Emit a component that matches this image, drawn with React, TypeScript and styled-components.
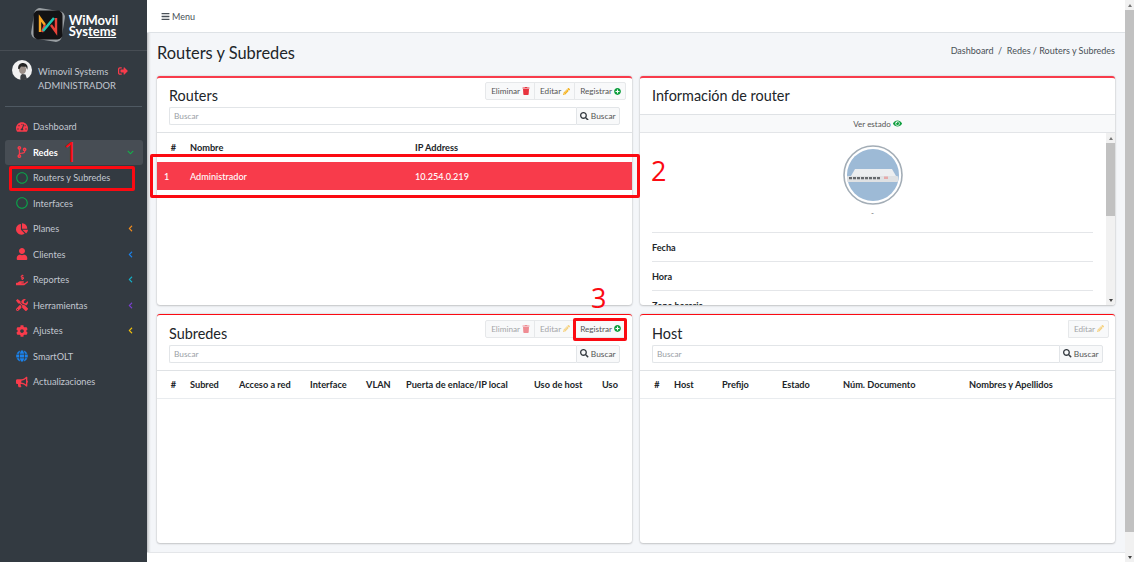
import React from "react";
import styled, { createGlobalStyle } from "styled-components";
import {
  FaBars,
  FaBullhorn,
  FaChartPie,
  FaChevronDown,
  FaChevronLeft,
  FaCodeBranch,
  FaCog,
  FaEye,
  FaGlobe,
  FaHandHoldingUsd,
  FaPencilAlt,
  FaPlusCircle,
  FaRegCircle,
  FaSearch,
  FaSignOutAlt,
  FaTachometerAlt,
  FaTools,
  FaTrash,
  FaUser,
} from "react-icons/fa";

const RED = "#f83b4b";
const MARK = "#fb0a12";
const FONT = `"Lato", "Noto Sans", sans-serif`;

const GlobalStyle = createGlobalStyle`
  *, *::before, *::after {
    box-sizing: border-box;
  }
  html, body {
    margin: 0;
    height: 100%;
    overflow: hidden;
  }
  body {
    font-family: ${FONT};
    font-size: 9px;
    color: #212529;
    background: #f4f6f9;
  }
`;

const Page = styled.div`
  position: relative;
  width: 1134px;
  height: 562px;
  display: flex;
  overflow: hidden;
`;

const Sidebar = styled.aside`
  width: 147px;
  flex: none;
  background: #333a41;
  color: #c2c7d0;
  box-shadow: 1px 0 3px rgba(0, 0, 0, 0.3);
  display: flex;
  flex-direction: column;
`;

const Brand = styled.div`
  height: 51px;
  flex: none;
  display: flex;
  align-items: center;
  justify-content: center;
  gap: 2px;
  border-bottom: 1px solid #474d54;
`;

const BrandText = styled.div`
  color: #fff;
  font-size: 13px;
  font-weight: 700;
  line-height: 12px;
  span {
    display: block;
    height: 11px;
    overflow: visible;
  }
  u {
    text-underline-offset: 1px;
  }
`;

const UserPanel = styled.div`
  height: 56px;
  margin: 0 5px;
  padding: 9px 7px 0;
  display: flex;
  gap: 6px;
  border-bottom: 1px solid #4f5962;
`;

const UserInfo = styled.div`
  font-size: 9.4px;
  line-height: 14px;
  padding-top: 5px;
  white-space: nowrap;
  svg {
    color: ${RED};
    font-size: 10px;
    margin-left: 7px;
    vertical-align: -1px;
  }
`;

const Nav = styled.nav`
  display: flex;
  flex-direction: column;
  padding: 7px 4px 0 5px;
`;

const NavItem = styled.div<{ $active?: boolean }>`
  height: 25.5px;
  display: flex;
  align-items: center;
  padding-left: 11px;
  padding-right: 9px;
  border-radius: 3px;
  font-size: 9.2px;
  background: ${({ $active }) => ($active ? "#474d54" : "transparent")};
  color: ${({ $active }) => ($active ? "#fff" : "#c2c7d0")};
  font-weight: ${({ $active }) => ($active ? 700 : 400)};
`;

const NavIcon = styled.span<{ $color?: string }>`
  width: 17px;
  display: flex;
  align-items: center;
  color: ${({ $color }) => $color || RED};
  font-size: 12px;
  flex: none;
`;

const NavLabel = styled.span`
  flex: 1;
  white-space: nowrap;
`;

const NavArrow = styled.span<{ $color: string }>`
  color: ${({ $color }) => $color};
  font-size: 7px;
  display: flex;
`;

const Main = styled.div`
  flex: 1;
  min-width: 0;
  display: flex;
  flex-direction: column;
`;

const TopBar = styled.header`
  height: 33px;
  flex: none;
  background: #fff;
  border-bottom: 1px solid #dee2e6;
  display: flex;
  align-items: center;
  gap: 2px;
  padding-left: 14px;
  font-size: 9px;
  color: #495057;
  svg {
    font-size: 9px;
  }
`;

const Workspace = styled.div`
  flex: 1;
  min-height: 0;
  display: flex;
  flex-direction: column;
  padding-right: 9px;
`;

const ContentHeader = styled.div`
  height: 43px;
  flex: none;
  display: flex;
  align-items: center;
  justify-content: space-between;
  padding: 0 10px 4px;
`;

const PageTitle = styled.h1`
  margin: 0;
  font-size: 16.4px;
  font-weight: 400;
  color: #212529;
`;

const Breadcrumb = styled.div`
  font-size: 9px;
  color: #495057;
  margin-bottom: 4px;
`;

const Grid = styled.div`
  display: grid;
  grid-template-columns: 475px 475px;
  grid-template-rows: 229px 229px;
  column-gap: 8px;
  row-gap: 9px;
  padding-left: 10px;
`;

const Card = styled.section<{ $thin?: boolean }>`
  background: #fff;
  border-top: ${({ $thin }) => ($thin ? `1.5px solid ${MARK}` : `2px solid ${RED}`)};
  padding-top: ${({ $thin }) => ($thin ? "0.5px" : "0")};
  border-radius: 3px;
  box-shadow: 0 0 2px rgba(0, 0, 0, 0.2), 0 1px 2px rgba(0, 0, 0, 0.15);
  display: flex;
  flex-direction: column;
  overflow: hidden;
`;

const CardHeader = styled.div`
  padding: 4px 12px 7px;
  border-bottom: 1px solid #dfe2e5;
  display: grid;
  grid-template-columns: 1fr auto;
  grid-template-rows: 25px 18px;
  flex: none;
`;

const InfoHeader = styled.div`
  height: 37px;
  flex: none;
  display: flex;
  align-items: center;
  padding: 0 12px 1px;
  border-bottom: 1px solid #dfe2e5;
`;

const CardTitle = styled.h3`
  margin: 0;
  font-size: 14.4px;
  font-weight: 400;
  line-height: 28px;
  color: #212529;
`;

const Tools = styled.div`
  display: flex;
  height: 18px;
  align-items: stretch;
  margin-right: -6px;
`;

const ToolButton = styled.button<{ $faded?: boolean }>`
  font: inherit;
  font-size: 8.2px;
  border: 1px solid #e6e8ea;
  margin-left: -1px;
  background: #f8f9fa;
  color: ${({ $faded }) => ($faded ? "#a4a6a8" : "#555")};
  padding: 0 4px 0 5px;
  display: flex;
  align-items: center;
  gap: 2px;
  svg {
    opacity: ${({ $faded }) => ($faded ? 0.55 : 1)};
  }
  &:first-child {
    border-radius: 2px 0 0 2px;
  }
  &:last-child {
    border-radius: 0 2px 2px 0;
  }
`;

const SearchRow = styled.div`
  grid-column: 1 / -1;
  display: flex;
  height: 18px;
`;

const SearchInput = styled.div`
  flex: 1;
  border: 1px solid #e2e5e8;
  border-right: 0;
  border-radius: 2px 0 0 2px;
  color: #9aa0a6;
  font-size: 8.3px;
  padding-left: 4px;
  display: flex;
  align-items: center;
`;

const SearchButton = styled.div`
  width: 44px;
  border: 1px solid #e2e5e8;
  border-radius: 0 2px 2px 0;
  background: #f8f9fa;
  color: #555;
  font-size: 8.4px;
  display: flex;
  align-items: center;
  justify-content: center;
  gap: 2px;
  svg {
    font-size: 8.5px;
    color: #343a40;
  }
`;

const HeadRow = styled.div<{ $cols: string; $tall?: boolean }>`
  display: grid;
  grid-template-columns: ${({ $cols }) => $cols};
  align-items: center;
  height: ${({ $tall }) => ($tall ? "28px" : "29px")};
  flex: none;
  font-size: 9.2px;
  font-weight: 700;
  color: #212529;
  white-space: nowrap;
  border-bottom: ${({ $tall }) => ($tall ? "1px solid #e9ecef" : "none")};
`;

const Selected = styled.div<{ $cols: string }>`
  display: grid;
  grid-template-columns: ${({ $cols }) => $cols};
  align-items: center;
  height: 28px;
  flex: none;
  background: ${RED};
  color: #fff;
  font-size: 9.1px;
  font-weight: 500;
`;

const Cell = styled.span<{ $center?: boolean; $inset?: boolean }>`
  text-align: ${({ $center }) => ($center ? "center" : "left")};
  padding-left: ${({ $inset }) => ($inset ? "7px" : "0")};
`;

const StateBar = styled.div`
  height: 18px;
  flex: none;
  background: #f8f9fa;
  border-bottom: 1px solid #e3e5e8;
  display: flex;
  align-items: center;
  justify-content: center;
  gap: 2px;
  font-size: 8px;
  color: #555;
  svg {
    color: #0e9f3e;
    font-size: 9px;
  }
`;

const InfoScroll = styled.div`
  flex: 1;
  min-height: 0;
  display: flex;
  overflow: hidden;
`;

const InfoBody = styled.div`
  flex: 1;
  min-width: 0;
  padding: 12px 13px 0 12px;
`;

const Avatar = styled.div`
  display: flex;
  flex-direction: column;
  align-items: center;
  font-size: 8px;
  color: #666;
  height: 88px;
  border-bottom: 1px solid #e4e6e9;
  gap: 3px;
`;

const InfoRow = styled.div`
  height: 29px;
  flex: none;
  display: flex;
  align-items: center;
  border-bottom: 1px solid #e4e6e9;
  font-size: 9.1px;
  font-weight: 700;
  color: #212529;
`;

const ScrollTrack = styled.div`
  width: 9px;
  flex: none;
  background: #f1f1f1;
  display: flex;
  flex-direction: column;
  justify-content: space-between;
`;

const ScrollArrow = styled.div<{ $down?: boolean }>`
  height: 10px;
  display: flex;
  align-items: center;
  justify-content: center;
  &::after {
    content: "";
    border-left: 2.5px solid transparent;
    border-right: 2.5px solid transparent;
    border-bottom: ${({ $down }) => ($down ? "0" : "3px solid #777")};
    border-top: ${({ $down }) => ($down ? "3px solid #444" : "0")};
  }
`;

const ScrollThumb = styled.div<{ $h: number }>`
  width: 100%;
  height: ${({ $h }) => $h}px;
  flex: none;
  background: #c1c1c1;
  margin-bottom: auto;
`;

const PageScroll = styled(ScrollTrack)`
  position: absolute;
  right: 0;
  top: 0;
  bottom: 0;
`;

const Footer = styled.div`
  position: absolute;
  left: 147px;
  right: 9px;
  bottom: 0;
  height: 10px;
  background: #fff;
  border-top: 1px solid #e4e6e9;
`;

const Markup = styled.div<{ $l: number; $t: number; $w: number; $h: number }>`
  position: absolute;
  left: ${({ $l }) => $l}px;
  top: ${({ $t }) => $t}px;
  width: ${({ $w }) => $w}px;
  height: ${({ $h }) => $h}px;
  border: 3px solid ${MARK};
  border-radius: 2px;
`;

const MarkNumber = styled.div<{ $l: number; $t: number }>`
  position: absolute;
  left: ${({ $l }) => $l}px;
  top: ${({ $t }) => $t}px;
  color: ${MARK};
  font-family: "Open Sans", sans-serif;
  font-weight: 400;
  font-size: 27px;
  line-height: 30px;
`;

const Logo = () => (
  <svg width="38" height="38" viewBox="0 0 38 38">
    <rect x="3.5" y="3.5" width="31" height="31" rx="6" fill="#9a9fa3" transform="rotate(9 19 19)" />
    <rect x="4.5" y="4.5" width="29" height="29" rx="5" fill="#131214" />
    <path d="M11 26V12l5 7" fill="none" stroke="#f6a623" strokeWidth="2.4" />
    <path d="M16 19l-3 7" fill="none" stroke="#e8433a" strokeWidth="2.4" />
    <path d="M27 12v14l-5-7" fill="none" stroke="#e8433a" strokeWidth="2.4" />
    <path d="M14 25L25 12" fill="none" stroke="#1fc8b4" strokeWidth="2.6" />
  </svg>
);

const Portrait = () => (
  <svg width="20" height="20" viewBox="0 0 20 20" style={{ flex: "none" }}>
    <circle cx="10" cy="10" r="10" fill="#f1f1f1" />
    <ellipse cx="10.5" cy="9.5" rx="3.6" ry="4.6" fill="#9b8f88" />
    <path d="M6.2 9C5.6 4.6 9 2.6 12 3.2c3 .5 4.4 3.2 3.2 6.6l-1.2-3-5-.4L7.4 9z" fill="#242424" />
    <path d="M8.5 20c-.5-3.5 0-5.5 2-6l3 .5 1.5 4.5A10 10 0 0 1 8.5 20z" fill="#3d4043" />
  </svg>
);

const RouterPicture = () => (
  <svg width="60" height="60" viewBox="0 0 60 60" style={{ flex: "none" }}>
    <circle cx="30" cy="30" r="29" fill="#fff" stroke="#a3adb6" strokeWidth="1.6" />
    <circle cx="30" cy="30" r="26" fill="#9dbad6" />
    <path d="M8 31l4-7h37l4 7z" fill="#eceef0" />
    <rect x="4" y="31" width="51" height="6" rx="1" fill="#dfe1e3" />
    <path d="M6 33.2h31" stroke="#666a6e" strokeWidth="2.2" strokeDasharray="3 1" fill="none" />
    <rect x="41" y="31.5" width="4" height="2.5" fill="#e6a9a9" />
  </svg>
);

const routerCols = "33px 225px 1fr";
const subnetCols = "33px 49px 71px 56px 40px 128px 68px 1fr";
const hostCols = "34px 48px 60px 61px 126px 1fr";

const navItems = [
  { label: "Planes", icon: <FaChartPie />, color: "#f28c1e" },
  { label: "Clientes", icon: <FaUser />, color: "#1b82ec" },
  { label: "Reportes", icon: <FaHandHoldingUsd />, color: "#14b0c8" },
  { label: "Herramientas", icon: <FaTools />, color: "#7a3fd0" },
  { label: "Ajustes", icon: <FaCog />, color: "#f4c20d" },
];

const SearchBar = () => (
  <SearchRow>
    <SearchInput>Buscar</SearchInput>
    <SearchButton>
      <FaSearch />
      Buscar
    </SearchButton>
  </SearchRow>
);

const ActionButtons = ({ faded }: { faded?: boolean }) => (
  <Tools>
    <ToolButton $faded={faded}>
      Eliminar <FaTrash color="#e8343f" size={8} />
    </ToolButton>
    <ToolButton $faded={faded}>
      Editar <FaPencilAlt color="#f5b21b" size={7} />
    </ToolButton>
    <ToolButton>
      Registrar <FaPlusCircle color="#0e9f3e" size={7} />
    </ToolButton>
  </Tools>
);

const App: React.FC = () => {
  return (
    <Page>
      <GlobalStyle />
      <Sidebar>
        <Brand>
          <Logo />
          <BrandText>
            <span>WiMovil</span>
            <span>
              Sys<u>tems</u>
            </span>
          </BrandText>
        </Brand>
        <UserPanel>
          <Portrait />
          <UserInfo>
            Wimovil Systems <FaSignOutAlt />
            <br />
            ADMINISTRADOR
          </UserInfo>
        </UserPanel>
        <Nav>
          <NavItem>
            <NavIcon>
              <FaTachometerAlt />
            </NavIcon>
            <NavLabel>Dashboard</NavLabel>
          </NavItem>
          <NavItem $active>
            <NavIcon>
              <FaCodeBranch />
            </NavIcon>
            <NavLabel>Redes</NavLabel>
            <NavArrow $color="#12b24a">
              <FaChevronDown />
            </NavArrow>
          </NavItem>
          <NavItem>
            <NavIcon $color="#0aa54a">
              <FaRegCircle />
            </NavIcon>
            <NavLabel>Routers y Subredes</NavLabel>
          </NavItem>
          <NavItem>
            <NavIcon $color="#0aa54a">
              <FaRegCircle />
            </NavIcon>
            <NavLabel>Interfaces</NavLabel>
          </NavItem>
          {navItems.map((item) => (
            <NavItem key={item.label}>
              <NavIcon>{item.icon}</NavIcon>
              <NavLabel>{item.label}</NavLabel>
              <NavArrow $color={item.color}>
                <FaChevronLeft />
              </NavArrow>
            </NavItem>
          ))}
          <NavItem>
            <NavIcon $color="#1b82ec">
              <FaGlobe />
            </NavIcon>
            <NavLabel>SmartOLT</NavLabel>
          </NavItem>
          <NavItem>
            <NavIcon>
              <FaBullhorn />
            </NavIcon>
            <NavLabel>Actualizaciones</NavLabel>
          </NavItem>
        </Nav>
      </Sidebar>

      <Main>
        <TopBar>
          <FaBars />
          Menu
        </TopBar>
        <Workspace>
          <ContentHeader>
            <PageTitle>Routers y Subredes</PageTitle>
            <Breadcrumb>Dashboard &nbsp;/&nbsp; Redes / Routers y Subredes</Breadcrumb>
          </ContentHeader>
          <Grid>
            <Card>
              <CardHeader>
                <CardTitle>Routers</CardTitle>
                <ActionButtons />
                <SearchBar />
              </CardHeader>
              <HeadRow $cols={routerCols}>
                <Cell $center>#</Cell>
                <Cell>Nombre</Cell>
                <Cell>IP Address</Cell>
              </HeadRow>
              <Selected $cols={routerCols}>
                <Cell $inset>1</Cell>
                <Cell>Administrador</Cell>
                <Cell>10.254.0.219</Cell>
              </Selected>
            </Card>

            <Card>
              <InfoHeader>
                <CardTitle>Información de router</CardTitle>
              </InfoHeader>
              <StateBar>
                Ver estado <FaEye />
              </StateBar>
              <InfoScroll>
                <InfoBody>
                  <Avatar>
                    <RouterPicture />-
                  </Avatar>
                  <InfoRow>Fecha</InfoRow>
                  <InfoRow>Hora</InfoRow>
                  <InfoRow>Zona horaria</InfoRow>
                </InfoBody>
                <ScrollTrack>
                  <ScrollArrow />
                  <ScrollThumb $h={73} />
                  <ScrollArrow $down />
                </ScrollTrack>
              </InfoScroll>
            </Card>

            <Card $thin>
              <CardHeader>
                <CardTitle>Subredes</CardTitle>
                <ActionButtons faded />
                <SearchBar />
              </CardHeader>
              <HeadRow $cols={subnetCols} $tall>
                <Cell $center>#</Cell>
                <Cell>Subred</Cell>
                <Cell>Acceso a red</Cell>
                <Cell>Interface</Cell>
                <Cell>VLAN</Cell>
                <Cell>Puerta de enlace/IP local</Cell>
                <Cell>Uso de host</Cell>
                <Cell>Uso</Cell>
              </HeadRow>
            </Card>

            <Card $thin>
              <CardHeader>
                <CardTitle>Host</CardTitle>
                <Tools>
                  <ToolButton $faded>
                    Editar <FaPencilAlt color="#f5b21b" size={7} />
                  </ToolButton>
                </Tools>
                <SearchBar />
              </CardHeader>
              <HeadRow $cols={hostCols} $tall>
                <Cell $center>#</Cell>
                <Cell>Host</Cell>
                <Cell>Prefijo</Cell>
                <Cell>Estado</Cell>
                <Cell>Núm. Documento</Cell>
                <Cell>Nombres y Apellidos</Cell>
              </HeadRow>
            </Card>
          </Grid>
        </Workspace>
      </Main>

      <Footer />
      <PageScroll>
        <ScrollArrow />
        <ScrollThumb $h={522} />
        <ScrollArrow $down />
      </PageScroll>

      <Markup $l={9} $t={166} $w={126} $h={25} />
      <MarkNumber $l={63} $t={137}>1</MarkNumber>
      <Markup $l={150} $t={154} $w={490} $h={44} />
      <MarkNumber $l={651} $t={156}>2</MarkNumber>
      <Markup $l={573} $t={318} $w={54} $h={23} />
      <MarkNumber $l={591} $t={283}>3</MarkNumber>
    </Page>
  );
};

export default App;
